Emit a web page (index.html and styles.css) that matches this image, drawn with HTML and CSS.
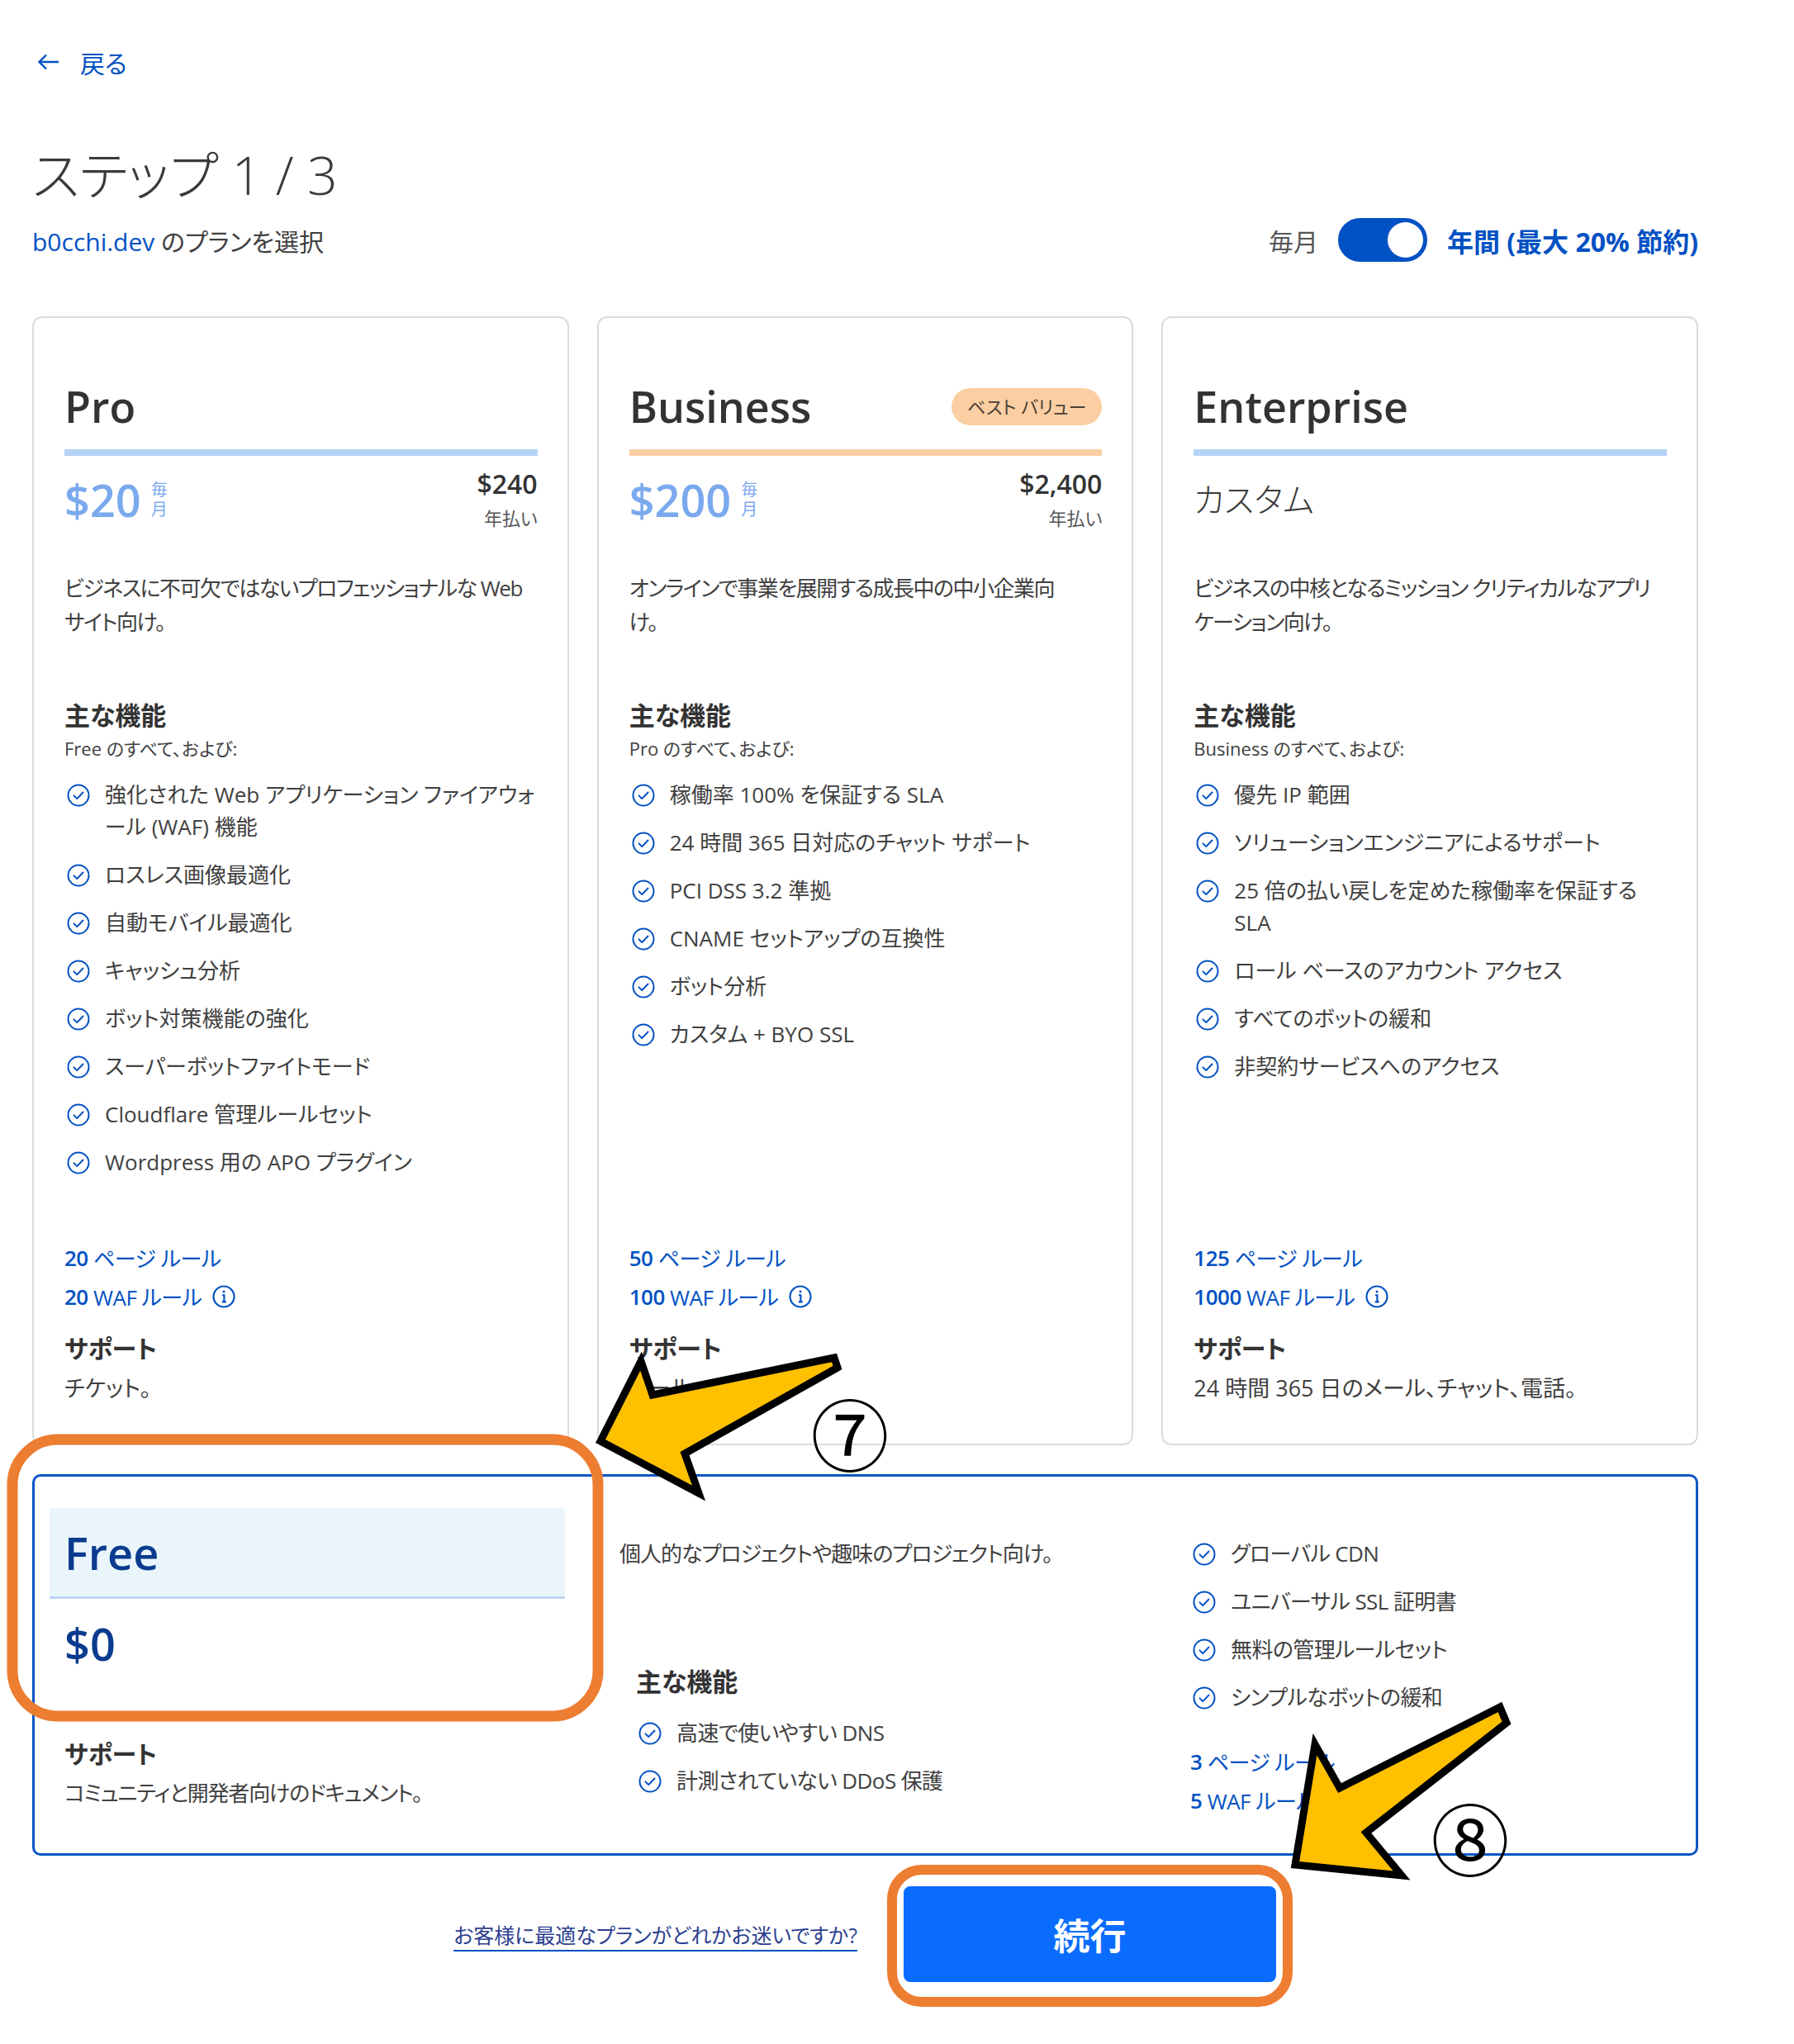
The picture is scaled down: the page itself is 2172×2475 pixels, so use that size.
FILE: index.html
```html
<!DOCTYPE html>
<html lang="ja">
<head>
    <meta charset="UTF-8">
    <meta name="viewport" content="width=device-width, initial-scale=1.0">
    <title>プランを選択</title>
    <link rel="stylesheet" href="styles.css">
</head>
<body>
    <svg class="sprite" aria-hidden="true">
        <symbol id="i-check" viewBox="0 0 24 24">
            <circle cx="12" cy="12" r="10" fill="none" stroke="currentColor" stroke-width="1.6"/>
            <path d="M7.6 12.3l3 3 5.8-6.1" fill="none" stroke="currentColor" stroke-width="1.6" stroke-linecap="round" stroke-linejoin="round"/>
        </symbol>
        <symbol id="i-info" viewBox="0 0 24 24">
            <circle cx="12" cy="12" r="10" fill="none" stroke="currentColor" stroke-width="1.7"/>
            <circle cx="12" cy="7.2" r="1.2" fill="currentColor"/>
            <path d="M10.4 10.6H12.3V17 M10.2 17.1h4" fill="none" stroke="currentColor" stroke-width="1.7"/>
        </symbol>
    </svg>

    <div class="page">
        <a class="back" href="#">
            <svg class="back-arrow" viewBox="0 0 30 24"><path d="M27 12H4 M12 3.5L3.5 12 12 20.5" fill="none" stroke="currentColor" stroke-width="2.4"/></svg>
            戻る
        </a>
        <h1 class="step">ステップ 1 / 3</h1>
        <div class="subhead">
            <p class="domain"><span class="domain-name">b0cchi.dev</span> のプランを選択</p>
            <div class="billing">
                <span class="billing-off">毎月</span>
                <span class="switch"><span class="knob"></span></span>
                <span class="billing-on">年間 (最大 20% 節約)</span>
            </div>
        </div>

        <div class="plans">
            <div class="plan">
                <div class="plan-head"><h2>Pro</h2></div>
                <div class="plan-bar"></div>
                <div class="price-row">
                    <div class="price"><span class="amount">$20</span><span class="per">毎<br>月</span></div>
                    <div class="annual">
                        <div class="annual-amount">$240</div>
                        <div class="annual-note">年払い</div>
                    </div>
                </div>
                <p class="plan-desc">ビジネスに不可欠ではないプロフェッショナルな Web<br>サイト向け。</p>
                <h3 class="feat-title">主な機能</h3>
                <p class="feat-sub">Free のすべて、および:</p>
                <ul class="features">
                    <li><svg class="check"><use href="#i-check"/></svg><span>強化された Web アプリケーション ファイアウォール (WAF) 機能</span></li>
                    <li><svg class="check"><use href="#i-check"/></svg><span>ロスレス画像最適化</span></li>
                    <li><svg class="check"><use href="#i-check"/></svg><span>自動モバイル最適化</span></li>
                    <li><svg class="check"><use href="#i-check"/></svg><span>キャッシュ分析</span></li>
                    <li><svg class="check"><use href="#i-check"/></svg><span>ボット対策機能の強化</span></li>
                    <li><svg class="check"><use href="#i-check"/></svg><span>スーパーボットファイトモード</span></li>
                    <li><svg class="check"><use href="#i-check"/></svg><span>Cloudflare 管理ルールセット</span></li>
                    <li><svg class="check"><use href="#i-check"/></svg><span>Wordpress 用の APO プラグイン</span></li>
                </ul>
                <div class="limits">
                    <div class="limit"><b>20</b>&nbsp;ページ ルール</div>
                    <div class="limit"><b>20</b>&nbsp;WAF ルール <svg class="info"><use href="#i-info"/></svg></div>
                    <h3 class="support-title">サポート</h3>
                    <p class="support-text">チケット。</p>
                </div>
            </div>

            <div class="plan">
                <div class="plan-head"><h2>Business</h2><span class="badge">ベスト バリュー</span></div>
                <div class="plan-bar peach"></div>
                <div class="price-row">
                    <div class="price"><span class="amount">$200</span><span class="per">毎<br>月</span></div>
                    <div class="annual">
                        <div class="annual-amount">$2,400</div>
                        <div class="annual-note">年払い</div>
                    </div>
                </div>
                <p class="plan-desc">オンラインで事業を展開する成長中の中小企業向<br>け。</p>
                <h3 class="feat-title">主な機能</h3>
                <p class="feat-sub">Pro のすべて、および:</p>
                <ul class="features">
                    <li><svg class="check"><use href="#i-check"/></svg><span>稼働率 100% を保証する SLA</span></li>
                    <li><svg class="check"><use href="#i-check"/></svg><span>24 時間 365 日対応のチャット サポート</span></li>
                    <li><svg class="check"><use href="#i-check"/></svg><span>PCI DSS 3.2 準拠</span></li>
                    <li><svg class="check"><use href="#i-check"/></svg><span>CNAME セットアップの互換性</span></li>
                    <li><svg class="check"><use href="#i-check"/></svg><span>ボット分析</span></li>
                    <li><svg class="check"><use href="#i-check"/></svg><span>カスタム + BYO SSL</span></li>
                </ul>
                <div class="limits">
                    <div class="limit"><b>50</b>&nbsp;ページ ルール</div>
                    <div class="limit"><b>100</b>&nbsp;WAF ルール <svg class="info"><use href="#i-info"/></svg></div>
                    <h3 class="support-title">サポート</h3>
                    <p class="support-text">メール、チャット。</p>
                </div>
            </div>

            <div class="plan">
                <div class="plan-head"><h2>Enterprise</h2></div>
                <div class="plan-bar"></div>
                <div class="price-row">
                    <div class="custom">カスタム</div>
                </div>
                <p class="plan-desc">ビジネスの中核となるミッション クリティカルなアプリケーション向け。</p>
                <h3 class="feat-title">主な機能</h3>
                <p class="feat-sub">Business のすべて、および:</p>
                <ul class="features">
                    <li><svg class="check"><use href="#i-check"/></svg><span>優先 IP 範囲</span></li>
                    <li><svg class="check"><use href="#i-check"/></svg><span>ソリューションエンジニアによるサポート</span></li>
                    <li><svg class="check"><use href="#i-check"/></svg><span>25 倍の払い戻しを定めた稼働率を保証する SLA</span></li>
                    <li><svg class="check"><use href="#i-check"/></svg><span>ロール ベースのアカウント アクセス</span></li>
                    <li><svg class="check"><use href="#i-check"/></svg><span>すべてのボットの緩和</span></li>
                    <li><svg class="check"><use href="#i-check"/></svg><span>非契約サービスへのアクセス</span></li>
                </ul>
                <div class="limits">
                    <div class="limit"><b>125</b>&nbsp;ページ ルール</div>
                    <div class="limit"><b>1000</b>&nbsp;WAF ルール <svg class="info"><use href="#i-info"/></svg></div>
                    <h3 class="support-title">サポート</h3>
                    <p class="support-text">24 時間 365 日のメール、チャット、電話。</p>
                </div>
            </div>
        </div>

        <div class="free">
            <div class="free-col">
                <div class="free-head">Free</div>
                <div class="free-price">$0</div>
                <h3 class="support-title">サポート</h3>
                <p class="support-text">コミュニティと開発者向けのドキュメント。</p>
            </div>
            <div class="free-col">
                <p class="free-desc">個人的なプロジェクトや趣味のプロジェクト向け。</p>
                <div class="free-feats">
                    <h3 class="feat-title">主な機能</h3>
                    <ul class="features">
                        <li><svg class="check"><use href="#i-check"/></svg><span>高速で使いやすい DNS</span></li>
                        <li><svg class="check"><use href="#i-check"/></svg><span>計測されていない DDoS 保護</span></li>
                    </ul>
                </div>
            </div>
            <div class="free-col">
                <ul class="features">
                    <li><svg class="check"><use href="#i-check"/></svg><span>グローバル CDN</span></li>
                    <li><svg class="check"><use href="#i-check"/></svg><span>ユニバーサル SSL 証明書</span></li>
                    <li><svg class="check"><use href="#i-check"/></svg><span>無料の管理ルールセット</span></li>
                    <li><svg class="check"><use href="#i-check"/></svg><span>シンプルなボットの緩和</span></li>
                </ul>
                <div class="free-limits">
                    <div class="limit"><b>3</b>&nbsp;ページ ルール</div>
                    <div class="limit"><b>5</b>&nbsp;WAF ルール <svg class="info"><use href="#i-info"/></svg></div>
                </div>
            </div>
        </div>

        <div class="actions">
            <a class="help-link" href="#">お客様に最適なプランがどれかお迷いですか?</a>
            <button class="continue">続行</button>
        </div>
    </div>

    <!-- annotation marks drawn over the screenshot -->
    <svg class="marks" width="2172" height="2475" viewBox="0 0 2172 2475">
        <rect x="15" y="1743" width="709" height="335" rx="55" fill="none" stroke="#ed7d31" stroke-width="13"/>
        <rect x="1080" y="2264" width="479" height="160" rx="36" fill="none" stroke="#ed7d31" stroke-width="12"/>
        <polygon points="1010,1644 790,1689 776,1648 727,1745 846,1808 829,1760 1014,1656" fill="#ffc000" stroke="#000" stroke-width="9" stroke-linejoin="miter"/>
        <polygon points="1816,2067 1622,2165 1592,2112 1568,2258 1697,2271 1654,2219 1824,2086" fill="#ffc000" stroke="#000" stroke-width="9" stroke-linejoin="miter"/>
        <text class="mark-num" x="1029" y="1733">⑦</text>
        <text class="mark-num" x="1780" y="2223">⑧</text>
    </svg>
</body>
</html>
```

FILE: styles.css
```css
body {
    margin: 0;
    background: #fff;
    color: #404040;
    font-family: "Open Sans", "Noto Sans CJK JP", sans-serif;
    font-feature-settings: "palt";
}
h1, h2, h3, p, ul {
    margin: 0;
    padding: 0;
}
.sprite {
    position: absolute;
    width: 0;
    height: 0;
    overflow: hidden;
}
.page {
    width: 2017px;
    padding-left: 39px;
    padding-bottom: 30px;
}

/* header */
.back {
    display: flex;
    align-items: center;
    gap: 23px;
    width: fit-content;
    margin-top: 55px;
    height: 40px;
    font-size: 30px;
    color: #0051c3;
    text-decoration: none;
}
.back-arrow {
    width: 30px;
    height: 24px;
    margin-left: 5px;
}
.step {
    margin-top: 77px;
    font-size: 64px;
    line-height: 80px;
    font-weight: 300;
    color: #3a3a3a;
}
.subhead {
    margin-top: 12px;
    height: 53px;
    display: flex;
    justify-content: space-between;
    align-items: center;
}
.domain {
    font-size: 30px;
    color: #404040;
}
.domain-name {
    color: #0051c3;
}
.billing {
    display: flex;
    align-items: center;
    gap: 24px;
    font-size: 30px;
}
.billing-off {
    color: #555;
}
.billing-on {
    color: #0051c3;
    font-size: 32px;
    font-weight: 700;
}
.switch {
    width: 108px;
    height: 53px;
    box-sizing: border-box;
    padding: 0 5px;
    border-radius: 27px;
    background: #0051c3;
    display: flex;
    justify-content: flex-end;
    align-items: center;
}
.knob {
    width: 43px;
    height: 43px;
    border-radius: 50%;
    background: #fff;
}

/* plan cards */
.plans {
    margin-top: 66px;
    display: grid;
    grid-template-columns: repeat(3, 1fr);
    gap: 34px;
}
.plan {
    border: 2px solid #dcdcdc;
    border-radius: 12px;
    padding: 75px 36px 48px 37px;
    display: flex;
    flex-direction: column;
}
.plan-head {
    height: 64px;
    display: flex;
    justify-content: space-between;
    align-items: center;
}
.plan-head h2 {
    font-size: 52px;
    line-height: 64px;
    font-weight: 600;
    color: #333;
}
.badge {
    height: 45px;
    line-height: 45px;
    padding: 0 19px;
    border-radius: 23px;
    background: #fbcfa3;
    font-size: 22px;
    color: #4a3f36;
}
.plan-bar {
    margin-top: 20px;
    height: 8px;
    background: #b6d3f7;
}
.plan-bar.peach {
    background: #fbcfa3;
}
.price-row {
    margin-top: 14px;
    display: flex;
    justify-content: space-between;
    align-items: flex-start;
}
.price {
    margin-top: 7px;
    display: flex;
    align-items: center;
    color: #7aa9ee;
}
.amount {
    font-size: 54px;
    line-height: 64px;
    font-weight: 600;
}
.per {
    margin-left: 12px;
    font-size: 20px;
    line-height: 24px;
}
.annual {
    text-align: right;
}
.annual-amount {
    font-size: 32px;
    line-height: 40px;
    font-weight: 600;
    color: #333;
}
.annual-note {
    margin-top: 6px;
    font-size: 22px;
    line-height: 30px;
    color: #555;
}
.custom {
    margin: 7px 0 5px;
    font-size: 40px;
    line-height: 64px;
    font-weight: 300;
    color: #3a3a3a;
}
.plan-desc {
    margin-top: 50px;
    min-height: 82px;
    font-size: 26px;
    line-height: 41px;
    letter-spacing: -1.5px;
}
.feat-title {
    margin-top: 72px;
    font-size: 31px;
    line-height: 40px;
    font-weight: 700;
    color: #333;
}
.feat-sub {
    margin-top: 5px;
    font-size: 22px;
    line-height: 30px;
}
.features {
    margin-top: 22px;
    list-style: none;
    display: flex;
    flex-direction: column;
    gap: 19px;
}
.plan .features {
    margin-bottom: 72px;
}
.features li {
    display: flex;
    gap: 17px;
    font-size: 26px;
    line-height: 39px;
}
.check {
    flex: none;
    width: 30px;
    height: 30px;
    margin: 4.5px 0 0 2px;
    color: #0051c3;
}
.limits {
    margin-top: auto;
}
.limit {
    display: flex;
    align-items: center;
    height: 47px;
    font-size: 26px;
    letter-spacing: -0.5px;
    color: #0051c3;
}
.limit b {
    font-weight: 600;
}
.info {
    width: 30px;
    height: 30px;
    margin-left: 12px;
    color: #0051c3;
}
.support-title {
    margin-top: 20px;
    font-size: 30px;
    line-height: 40px;
    font-weight: 700;
    color: #333;
}
.support-text {
    margin-top: 8px;
    font-size: 27px;
    line-height: 39px;
}

/* free plan */
.free {
    margin-top: 35px;
    border: 3px solid #0b55c6;
    border-radius: 10px;
    padding: 38px 18px 41px;
    display: grid;
    grid-template-columns: 624px 625px 1fr;
    column-gap: 66px;
}
.free-head {
    height: 110px;
    box-sizing: border-box;
    padding-left: 18px;
    display: flex;
    align-items: center;
    background: #e9f5fb;
    border-bottom: 3px solid #bcd6f3;
    border-radius: 4px 4px 0 0;
    font-size: 54px;
    font-weight: 600;
    color: #0a3b8e;
}
.free-price {
    margin-top: 22px;
    padding-left: 18px;
    font-size: 54px;
    line-height: 64px;
    font-weight: 600;
    color: #0a3b8e;
}
.free-col .support-title {
    margin-top: 82px;
    padding-left: 18px;
}
.free-col .support-text {
    padding-left: 18px;
    font-size: 26px;
    letter-spacing: -1.2px;
}
.free-desc {
    margin-top: 36px;
    font-size: 26px;
    line-height: 39px;
    letter-spacing: -1px;
}
.free .features li {
    letter-spacing: -0.6px;
}
.free-feats {
    margin-top: 115px;
    padding-left: 20px;
}
.free-feats .feat-title {
    margin-top: 0;
}
.free-feats .features {
    margin-top: 23px;
}
.free-col > .features {
    margin-top: 36px;
}
.free-limits {
    margin-top: 34px;
}

/* bottom actions */
.actions {
    margin-top: 37px;
    display: grid;
    grid-template-columns: 999px 451px;
    column-gap: 56px;
    align-items: center;
}
.help-link {
    justify-self: end;
    font-size: 25px;
    color: #2d3f8f;
    text-decoration: underline;
    text-decoration-color: #0051c3;
    text-decoration-thickness: 2px;
    text-underline-offset: 8px;
}
.continue {
    height: 116px;
    border: none;
    border-radius: 8px;
    background: #0a6cff;
    color: #fff;
    font-family: inherit;
    font-size: 44px;
    font-weight: 700;
    cursor: pointer;
}

/* annotation overlay */
.marks {
    position: absolute;
    left: 0;
    top: 0;
    pointer-events: none;
}
.mark-num {
    font-family: "Noto Sans CJK JP", sans-serif;
    font-size: 95px;
    text-anchor: middle;
    dominant-baseline: central;
    fill: #000;
}
```
